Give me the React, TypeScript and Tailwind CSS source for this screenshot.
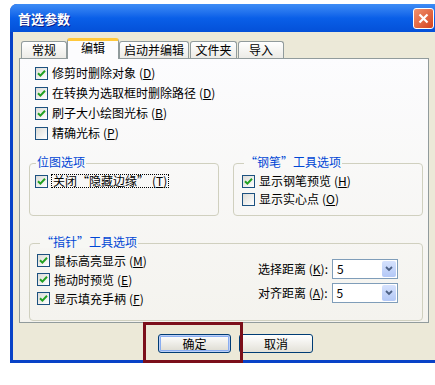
import React from "react";

const FONT = '"Noto Sans CJK SC", "Liberation Sans", sans-serif';

function Check({ checked }: { checked: boolean }) {
  return (
    <span className="relative inline-flex h-[13px] w-[13px] shrink-0 border border-[#1c5180] bg-gradient-to-br from-[#dcdcd7] to-white">
      {checked && (
        <svg className="absolute left-[1px] top-[1px]" width="9" height="9" viewBox="0 0 9 9">
          <path d="M1 4.2 L3.4 6.6 L8 1.8" fill="none" stroke="#21a121" strokeWidth="2" />
        </svg>
      )}
    </span>
  );
}

function Row({
  checked,
  text,
  k,
  h = "h-[20px]",
  focus = false,
}: {
  checked: boolean;
  text: string;
  k: string;
  h?: string;
  focus?: boolean;
}) {
  return (
    <div className={`flex items-center ${h}`}>
      <Check checked={checked} />
      <span
        className={`ml-[4px] text-[12px] leading-none text-black ${
          focus ? "outline-1 outline-dotted outline-black px-[1px]" : ""
        }`}
      >
        {text}
        <span className="ml-[3px]">
          (<u>{k}</u>)
        </span>
      </span>
    </div>
  );
}

function Combo() {
  return (
    <div className="flex h-[20px] w-[66px] items-center border border-[#7f9db9] bg-white">
      <span className="flex-1 pl-[4px] text-[12px] leading-none text-black">5</span>
      <span className="mr-[1px] flex h-[16px] w-[14px] items-center justify-center rounded-[2px] bg-gradient-to-b from-[#d6e2fd] to-[#b3c8f6]">
        <svg width="8" height="6" viewBox="0 0 8 6">
          <path d="M1 1 L4 4 L7 1" fill="none" stroke="#4d6185" strokeWidth="1.8" />
        </svg>
      </span>
    </div>
  );
}

function Tab({ label, w, active = false }: { label: string; w: string; active?: boolean }) {
  if (active) {
    return (
      <div
        className={`relative z-10 flex h-[21px] ${w} items-start justify-center rounded-t-[3px] border-x border-[#919b9c] border-t-[3px] border-t-[#ffc83c] bg-[#fcfcfe] pt-[1px] text-[12px] leading-none text-black`}
      >
        {label}
      </div>
    );
  }
  return (
    <div
      className={`mt-[3px] flex h-[17px] ${w} items-center justify-center rounded-t-[3px] border border-b-0 border-[#919b9c] bg-gradient-to-b from-white to-[#ecebe6] text-[12px] leading-none text-black`}
    >
      {label}
    </div>
  );
}

export default function App() {
  return (
    <div className="relative h-[385px] w-[435px] overflow-hidden bg-white" style={{ fontFamily: FONT }}>
      <div className="pl-[10px] pt-[4px]">
        <div className="flex h-[359px] w-[440px] flex-col rounded-t-[7px] bg-[#0842c7]">
          {/* title bar */}
          <div className="flex h-[28px] items-center rounded-t-[7px] bg-gradient-to-b from-[#3d8cf5] via-[#0a5fe8] to-[#0450d8] pl-[8px]">
            <span className="text-[13px] font-bold leading-none text-white [text-shadow:1px_1px_0_#0a1e8a]">
              首选参数
            </span>
            <span className="ml-[343px] mt-[1px] flex h-[21px] w-[21px] items-center justify-center rounded-[3px] border border-white bg-gradient-to-br from-[#f0906c] to-[#d3401b]">
              <svg width="11" height="11" viewBox="0 0 11 11">
                <path d="M1.5 1.5 L9.5 9.5 M9.5 1.5 L1.5 9.5" stroke="white" strokeWidth="2.2" />
              </svg>
            </span>
          </div>
          {/* client */}
          <div className="mb-[3px] ml-[3px] flex flex-1 flex-col bg-[#ece9d8] pl-[6px] pt-[6px]">
            {/* tabs */}
            <div className="flex h-[20px] pl-[2px]">
              <Tab label="常规" w="w-[46px]" />
              <Tab label="编辑" w="w-[52px]" active />
              <Tab label="启动并编辑" w="w-[70px]" />
              <div className="w-[1px]" />
              <Tab label="文件夹" w="w-[47px]" />
              <div className="w-[1px]" />
              <Tab label="导入" w="w-[46px]" />
            </div>
            {/* panel */}
            <div className="flex h-[265px] w-[410px] flex-col border border-[#919b9c] bg-gradient-to-b from-[#fcfcfe] to-[#f4f3ee] pl-[15px] pt-[4px]">
              <Row checked text="修剪时删除对象" k="D" />
              <Row checked text="在转换为选取框时删除路径" k="D" />
              <Row checked text="刷子大小绘图光标" k="B" />
              <Row checked={false} text="精确光标" k="P" />

              <div className="-ml-[6px] mt-[20px] flex gap-[14px]">
                <div className="relative h-[53px] w-[190px] rounded-[4px] border border-[#d0d0bf] pl-[5px] pt-[7px]">
                  <span className="absolute -top-[8px] left-[6px] bg-[#f9f9f8] px-[1px] text-[12px] leading-none text-[#0046d5]">
                    位图选项
                  </span>
                  <Row checked text="关闭“隐藏边缘”" k="T" focus />
                </div>
                <div className="relative h-[53px] w-[190px] rounded-[4px] border border-[#d0d0bf] pl-[8px] pt-[8px]">
                  <span className="absolute -top-[8px] left-[10px] bg-[#f9f9f8] px-[1px] text-[12px] leading-none text-[#0046d5]">
                    “钢笔”工具选项
                  </span>
                  <Row checked text="显示钢笔预览" k="H" h="h-[18px]" />
                  <Row checked={false} text="显示实心点" k="O" h="h-[18px]" />
                </div>
              </div>

              <div className="relative -ml-[6px] mt-[27px] flex h-[78px] w-[394px] rounded-[4px] border border-[#d0d0bf] pl-[7px] pt-[7px]">
                <span className="absolute -top-[8px] left-[10px] bg-[#f7f7f4] px-[1px] text-[12px] leading-none text-[#0046d5]">
                  “指针”工具选项
                </span>
                <div className="flex flex-col">
                  <Row checked text="鼠标高亮显示" k="M" h="h-[19px]" />
                  <Row checked text="拖动时预览" k="E" h="h-[19px]" />
                  <Row checked text="显示填充手柄" k="F" h="h-[19px]" />
                </div>
                <div className="ml-auto mr-[24px] mt-[8px] flex flex-col gap-[4px]">
                  <div className="flex h-[20px] items-center">
                    <span className="text-[12px] leading-none text-black">
                      选择距离 (<u>K</u>):
                    </span>
                    <span className="ml-[4px]">
                      <Combo />
                    </span>
                  </div>
                  <div className="flex h-[20px] items-center">
                    <span className="text-[12px] leading-none text-black">
                      对齐距离 (<u>A</u>):
                    </span>
                    <span className="ml-[4px]">
                      <Combo />
                    </span>
                  </div>
                </div>
              </div>
            </div>
            {/* buttons */}
            <div className="flex gap-[8px] pl-[139px] pt-[11px]">
              <div className="flex h-[19px] w-[73px] items-center justify-center rounded-[3px] border border-[#003c74] bg-gradient-to-b from-white to-[#dcdad0] text-[12px] leading-none text-black shadow-[inset_0_0_0_1px_#bccff7,inset_0_0_0_2px_#89adf0]">
                确定
              </div>
              <div className="flex h-[19px] w-[74px] items-center justify-center rounded-[3px] border border-[#003c74] bg-gradient-to-b from-white to-[#e3e1d8] text-[12px] leading-none text-black">
                取消
              </div>
            </div>
          </div>
        </div>
      </div>
      {/* annotation box */}
      <div className="absolute left-[143px] top-[322px] h-[41px] w-[100px] border-[3px] border-[#7b0f1a]" />
    </div>
  );
}
